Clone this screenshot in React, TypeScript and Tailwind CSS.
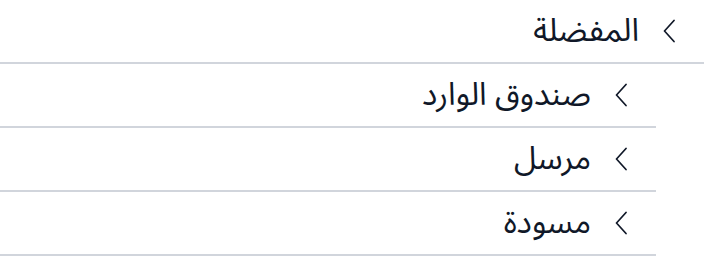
import React from 'react';

const Chevron = () => (
  <svg width="12" height="24" viewBox="0 0 12 24" fill="none" className="shrink-0 text-gray-900">
    <polyline points="11,1.5 1.5,12 11,22.5" stroke="currentColor" strokeWidth="1.7" strokeLinecap="round" strokeLinejoin="round" />
  </svg>
);

const Row = ({ label }: { label: string }) => (
  <div className="flex h-16 items-center gap-6 pr-[29px] border-b-2 border-gray-300">
    <Chevron />
    <span className="text-[32px] leading-[48px] text-gray-900">{label}</span>
  </div>
);

export default function App() {
  const children = ['صندوق الوارد', 'مرسل', 'مسودة'];

  return (
    <div dir="rtl" className="w-[704px] h-[256px] bg-white overflow-hidden" style={{ fontFamily: '"Noto Sans Arabic", "Noto Sans", "DejaVu Sans", sans-serif' }}>
      <Row label="المفضلة" />
      <div className="mr-12">
        {children.map((c) => (
          <Row key={c} label={c} />
        ))}
      </div>
    </div>
  );
}
